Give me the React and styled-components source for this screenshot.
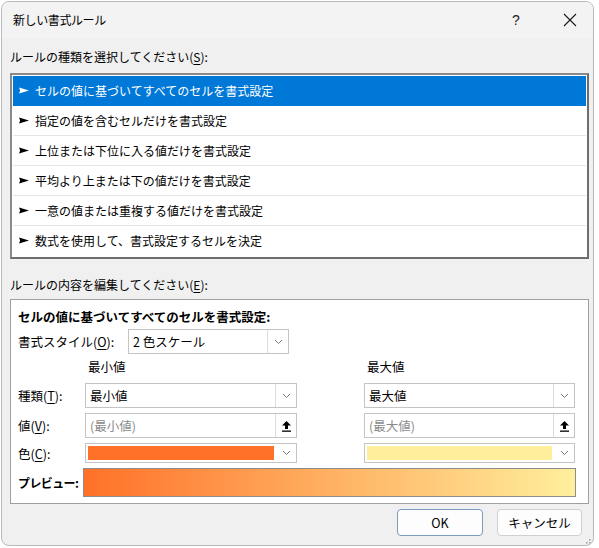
import React from 'react'
import styled, { createGlobalStyle } from 'styled-components'

const GlobalStyle = createGlobalStyle`
  html, body { margin: 0; padding: 0; background: #ffffff; }
  body {
    font-family: "Noto Sans CJK JP", "Noto Sans", sans-serif;
    font-size: 12px;
    color: #000;
  }
`

const ruleTypes = [
  'セルの値に基づいてすべてのセルを書式設定',
  '指定の値を含むセルだけを書式設定',
  '上位または下位に入る値だけを書式設定',
  '平均より上または下の値だけを書式設定',
  '一意の値または重複する値だけを書式設定',
  '数式を使用して、書式設定するセルを決定',
]

const Chevron = () => (
  <svg width="9" height="6" viewBox="0 0 9 6">
    <path d="M1 1 L4.5 4.5 L8 1" fill="none" stroke="#7a7a7a" strokeWidth="1" />
  </svg>
)

const UploadIcon = () => (
  <svg width="11" height="12" viewBox="0 0 11 12">
    <path d="M5.5 1 L10 5.5 L7 5.5 L7 9 L4 9 L4 5.5 L1 5.5 Z" fill="#000" />
    <rect x="1" y="10.5" width="9" height="1.3" fill="#000" />
  </svg>
)

const Pointer = ({ color }) => (
  <svg width="10" height="7" viewBox="0 0 10 7">
    <polygon points="0,0.5 10,3.5 0,6.5 1.2,3.5" fill={color} />
  </svg>
)

const App = () => {
  return (
    <>
      <GlobalStyle />
      <Dialog>
        <TitleBar>
          <Title>新しい書式ルール</Title>
          <TitleButtons>
            <HelpButton>?</HelpButton>
            <CloseButton>
              <svg width="14" height="14" viewBox="0 0 14 14">
                <path d="M1 1 L13 13 M13 1 L1 13" stroke="#1a1a1a" strokeWidth="1.1" />
              </svg>
            </CloseButton>
          </TitleButtons>
        </TitleBar>

        <Body>
          <SectionLabel $top={11} $bottom={8}>ルールの種類を選択してください(<u>S</u>):</SectionLabel>
          <ListBox>
            {ruleTypes.map((t, i) => (
              <ListRow key={t} $selected={i === 0} $last={i === ruleTypes.length - 1}>
                <ArrowBox><Pointer color={i === 0 ? '#fff' : '#000'} /></ArrowBox>
                <span>{t}</span>
              </ListRow>
            ))}
          </ListBox>

          <SectionLabel $top={18} $bottom={6}>ルールの内容を編集してください(<u>E</u>):</SectionLabel>
          <Panel>
            <PanelHeading>セルの値に基づいてすべてのセルを書式設定:</PanelHeading>
            <StyleRow>
              <FieldLabel $width={110}>書式スタイル(<u>O</u>):</FieldLabel>
              <Select $width={161} $height={25}>
                <SelectText>2&nbsp;色スケール</SelectText>
                <DropButton><Chevron /></DropButton>
              </Select>
            </StyleRow>

            <FieldGrid>
              <span />
              <ColumnHead>最小値</ColumnHead>
              <span />
              <ColumnHead>最大値</ColumnHead>

              <FieldLabel>種類(<u>T</u>):</FieldLabel>
              <Select $height={25}>
                <SelectText>最小値</SelectText>
                <DropButton><Chevron /></DropButton>
              </Select>
              <span />
              <Select $height={25}>
                <SelectText>最大値</SelectText>
                <DropButton><Chevron /></DropButton>
              </Select>

              <FieldLabel>値(<u>V</u>):</FieldLabel>
              <Select $height={25}>
                <SelectText $muted>(最小値)</SelectText>
                <DropButton><UploadIcon /></DropButton>
              </Select>
              <span />
              <Select $height={25}>
                <SelectText $muted>(最大値)</SelectText>
                <DropButton><UploadIcon /></DropButton>
              </Select>

              <FieldLabel>色(<u>C</u>):</FieldLabel>
              <Select $height={20}>
                <ColorSwatch $color="#ff7128" />
                <DropButton $plain><Chevron /></DropButton>
              </Select>
              <span />
              <Select $height={20}>
                <ColorSwatch $color="#ffef9c" />
                <DropButton $plain><Chevron /></DropButton>
              </Select>
            </FieldGrid>

            <PreviewRow>
              <PreviewLabel>プレビュー:</PreviewLabel>
              <Preview />
            </PreviewRow>
          </Panel>

          <ButtonRow>
            <Button $primary $width={86}>OK</Button>
            <Button $width={85}>キャンセル</Button>
          </ButtonRow>
        </Body>
        <Grip>
          <svg width="10" height="10" viewBox="0 0 10 10">
            {[[8, 2], [8, 5], [5, 5], [8, 8], [5, 8], [2, 8]].map(([x, y]) => (
              <rect key={`${x}-${y}`} x={x} y={y} width="1.5" height="1.5" fill="#9a9a9a" />
            ))}
          </svg>
        </Grip>
      </Dialog>
    </>
  )
}

export default App

const Dialog = styled.div`
  position: relative;
  box-sizing: border-box;
  width: 593px;
  height: 545px;
  margin: 1px 0 0 1px;
  background: #f0f0f0;
  border: 1px solid #b9b9b9;
  border-radius: 8px;
  display: flex;
  flex-direction: column;
  overflow: hidden;
`

const TitleBar = styled.div`
  height: 36px;
  flex-shrink: 0;
  display: flex;
  align-items: center;
  justify-content: space-between;
  padding-left: 11px;
  background: #f3f3f3;
`

const Title = styled.div`
  font-size: 12px;
  letter-spacing: -0.4px;
  color: #000;
  margin-top: -1px;
`

const TitleButtons = styled.div`
  display: flex;
  align-items: center;
  height: 100%;
`

const HelpButton = styled.div`
  width: 46px;
  text-align: center;
  font-family: "Liberation Sans", sans-serif;
  font-size: 14px;
  color: #222;
  margin-right: 8px;
`

const CloseButton = styled.div`
  width: 46px;
  height: 100%;
  display: flex;
  align-items: center;
  justify-content: center;
`

const Body = styled.div`
  padding: 0 3px 0 8px;
  display: flex;
  flex-direction: column;
`

const SectionLabel = styled.div`
  margin-top: ${p => p.$top}px;
  margin-bottom: ${p => p.$bottom}px;
  height: 16px;
  line-height: 16px;
  u { text-decoration-thickness: 1px; text-underline-offset: 2px; }
`

const ListBox = styled.div`
  width: 579px;
  box-sizing: border-box;
  height: 186px;
  flex-shrink: 0;
  background: #fff;
  border: 2px solid #8a8a8a;
  border-right-color: #6e6e6e;
  border-bottom-color: #6e6e6e;
  padding: 1px 1px 0 1px;
  display: flex;
  flex-direction: column;
`

const ListRow = styled.div`
  box-sizing: border-box;
  height: 30px;
  flex-shrink: 0;
  display: flex;
  align-items: center;
  padding-left: 6px;
  background: ${p => (p.$selected ? '#0078d7' : '#fff')};
  color: ${p => (p.$selected ? '#fff' : '#000')};
  border-bottom: 1px solid ${p => (p.$selected || p.$last ? 'transparent' : '#e6e6e6')};
  font-size: 12px;
`

const ArrowBox = styled.span`
  display: flex;
  align-items: center;
  margin-right: 6px;
`

const Panel = styled.div`
  width: 579px;
  box-sizing: border-box;
  height: 205px;
  flex-shrink: 0;
  background: #fff;
  border: 1px solid #a0a0a0;
  padding: 8px 0 0 7px;
  display: flex;
  flex-direction: column;
`

const PanelHeading = styled.div`
  font-weight: bold;
  font-size: 12.5px;
  height: 17px;
  line-height: 17px;
  white-space: nowrap;
`

const StyleRow = styled.div`
  display: flex;
  align-items: center;
  margin-top: 4px;
`

const FieldLabel = styled.div`
  width: ${p => (p.$width ? `${p.$width}px` : 'auto')};
  font-size: 12.5px;
  white-space: nowrap;
  align-self: center;
  u { text-decoration-thickness: 1px; text-underline-offset: 2px; }
`

const FieldGrid = styled.div`
  display: grid;
  grid-template-columns: 67px 212px 67px 211px;
  grid-template-rows: 24px 25px 25px 20px;
  row-gap: 5px;
  align-items: center;
`

const ColumnHead = styled.div`
  padding-left: 3px;
  font-size: 12.5px;
  align-self: center;
`

const Select = styled.div`
  box-sizing: border-box;
  width: ${p => (p.$width ? `${p.$width}px` : '100%')};
  height: ${p => p.$height}px;
  border: 1px solid #c4c4c4;
  background: #fff;
  display: flex;
  align-items: stretch;
`

const SelectText = styled.div`
  flex: 1;
  display: flex;
  align-items: center;
  padding-left: 4px;
  font-size: 12.5px;
  white-space: pre;
  color: ${p => (p.$muted ? '#8a8a8a' : '#000')};
`

const DropButton = styled.div`
  width: 20px;
  flex-shrink: 0;
  display: flex;
  align-items: center;
  justify-content: center;
  border-left: 1px solid ${p => (p.$plain ? 'transparent' : '#dcdcdc')};
`

const ColorSwatch = styled.div`
  flex: 1;
  margin: 2px 1px 2px 2px;
  background: ${p => p.$color};
`

const PreviewRow = styled.div`
  display: flex;
  align-items: center;
  margin-top: 5px;
`

const PreviewLabel = styled.div`
  width: 65px;
  flex-shrink: 0;
  font-weight: bold;
  font-size: 12px;
  white-space: nowrap;
  letter-spacing: -0.6px;
`

const Preview = styled.div`
  width: 493px;
  height: 29px;
  box-sizing: border-box;
  border: 1px solid #8c8c8c;
  background: linear-gradient(to right, #ff7128, #ffef9c);
`

const ButtonRow = styled.div`
  display: flex;
  justify-content: flex-end;
  gap: 14px;
  margin-top: 5px;
  padding-right: 8px;
`

const Button = styled.button`
  box-sizing: border-box;
  width: ${p => p.$width}px;
  height: 27px;
  background: #fdfdfd;
  border: 1px solid ${p => (p.$primary ? '#7a9cbf' : '#d0d0d0')};
  border-radius: 4px;
  font-family: "Noto Sans CJK JP", "Noto Sans", sans-serif;
  font-size: 12.5px;
  color: #000;
  padding: 0;
`

const Grip = styled.div`
  position: absolute;
  right: 2px;
  bottom: 2px;
  width: 10px;
  height: 10px;
`
